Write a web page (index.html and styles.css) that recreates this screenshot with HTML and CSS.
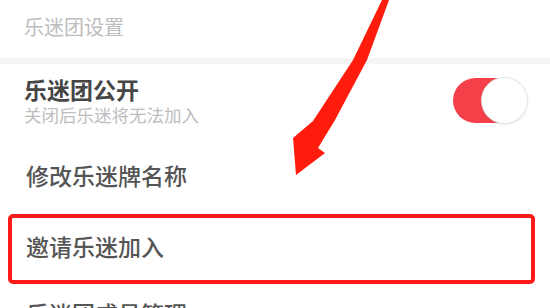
FILE: index.html
```html
<!DOCTYPE html>
<html lang="zh-CN">
<head>
<meta charset="utf-8">
<link rel="stylesheet" href="styles.css">
</head>
<body>
<div class="page">
  <div class="group-title">乐迷团设置</div>
  <div class="band"></div>
  <div class="row row-switch">
    <div class="texts">
      <div class="title">乐迷团公开</div>
      <div class="sub">关闭后乐迷将无法加入</div>
    </div>
    <div class="toggle"><span class="knob"></span></div>
  </div>
  <div class="row row-plain">
    <div class="label">修改乐迷牌名称</div>
  </div>
  <div class="row row-boxed">
    <div class="label">邀请乐迷加入</div>
  </div>
  <div class="row row-last">
    <div class="label">乐迷团成员管理</div>
  </div>
  <svg class="arrow" width="550" height="308" viewBox="0 0 550 308">
    <path d="M382,0 L353,60 L313,121 L293,138 L296,175 L325,153 L318,148 L335,120 L367,60 L389,0 Z" fill="#ff1c0c"/>
  </svg>
</div>
</body>
</html>
```

FILE: styles.css
```css
html, body {
  margin: 0;
  padding: 0;
  background: #ffffff;
}
.page {
  position: relative;
  width: 550px;
  height: 308px;
  overflow: hidden;
  font-family: "Noto Sans CJK SC", "Noto Sans", sans-serif;
  background: #ffffff;
}
.group-title {
  height: 58px;
  box-sizing: border-box;
  padding: 17px 0 0 24px;
  font-size: 20px;
  line-height: 20px;
  color: #bdbdbd;
}
.band {
  height: 6px;
  background: #f5f5f5;
}
.row {
  display: flex;
  align-items: center;
  box-sizing: border-box;
}
.row-switch {
  height: 73px;
  padding: 0 23px 0 24px;
  justify-content: space-between;
}
.texts {
  display: flex;
  flex-direction: column;
  gap: 2px;
}
.title {
  font-size: 23px;
  line-height: 26px;
  font-weight: 700;
  color: #464646;
}
.sub {
  font-size: 17.5px;
  line-height: 21px;
  color: #bdbdbd;
}
.toggle {
  width: 74px;
  height: 45px;
  border-radius: 23px;
  background: #f5404a;
  display: flex;
  justify-content: flex-end;
}
.knob {
  width: 45px;
  height: 45px;
  border-radius: 50%;
  background: #ffffff;
  box-shadow: 0 0 0 1px #e6e6e6, 0 1px 3px rgba(0,0,0,0.18);
}
.label {
  font-size: 23px;
  line-height: 28px;
  font-weight: 500;
  color: #555555;
}
.row-plain {
  height: 76px;
  padding-left: 26px;
}
.row-boxed {
  margin: 1px 15px 0 8px;
  height: 70px;
  border: 4px solid #ff1a1a;
  border-radius: 5px;
  padding: 14px 0 20px 14px;
  align-items: flex-start;
}
.row-last {
  margin-top: 15px;
  padding-left: 26px;
}
.arrow {
  position: absolute;
  left: 0;
  top: 0;
}
```
